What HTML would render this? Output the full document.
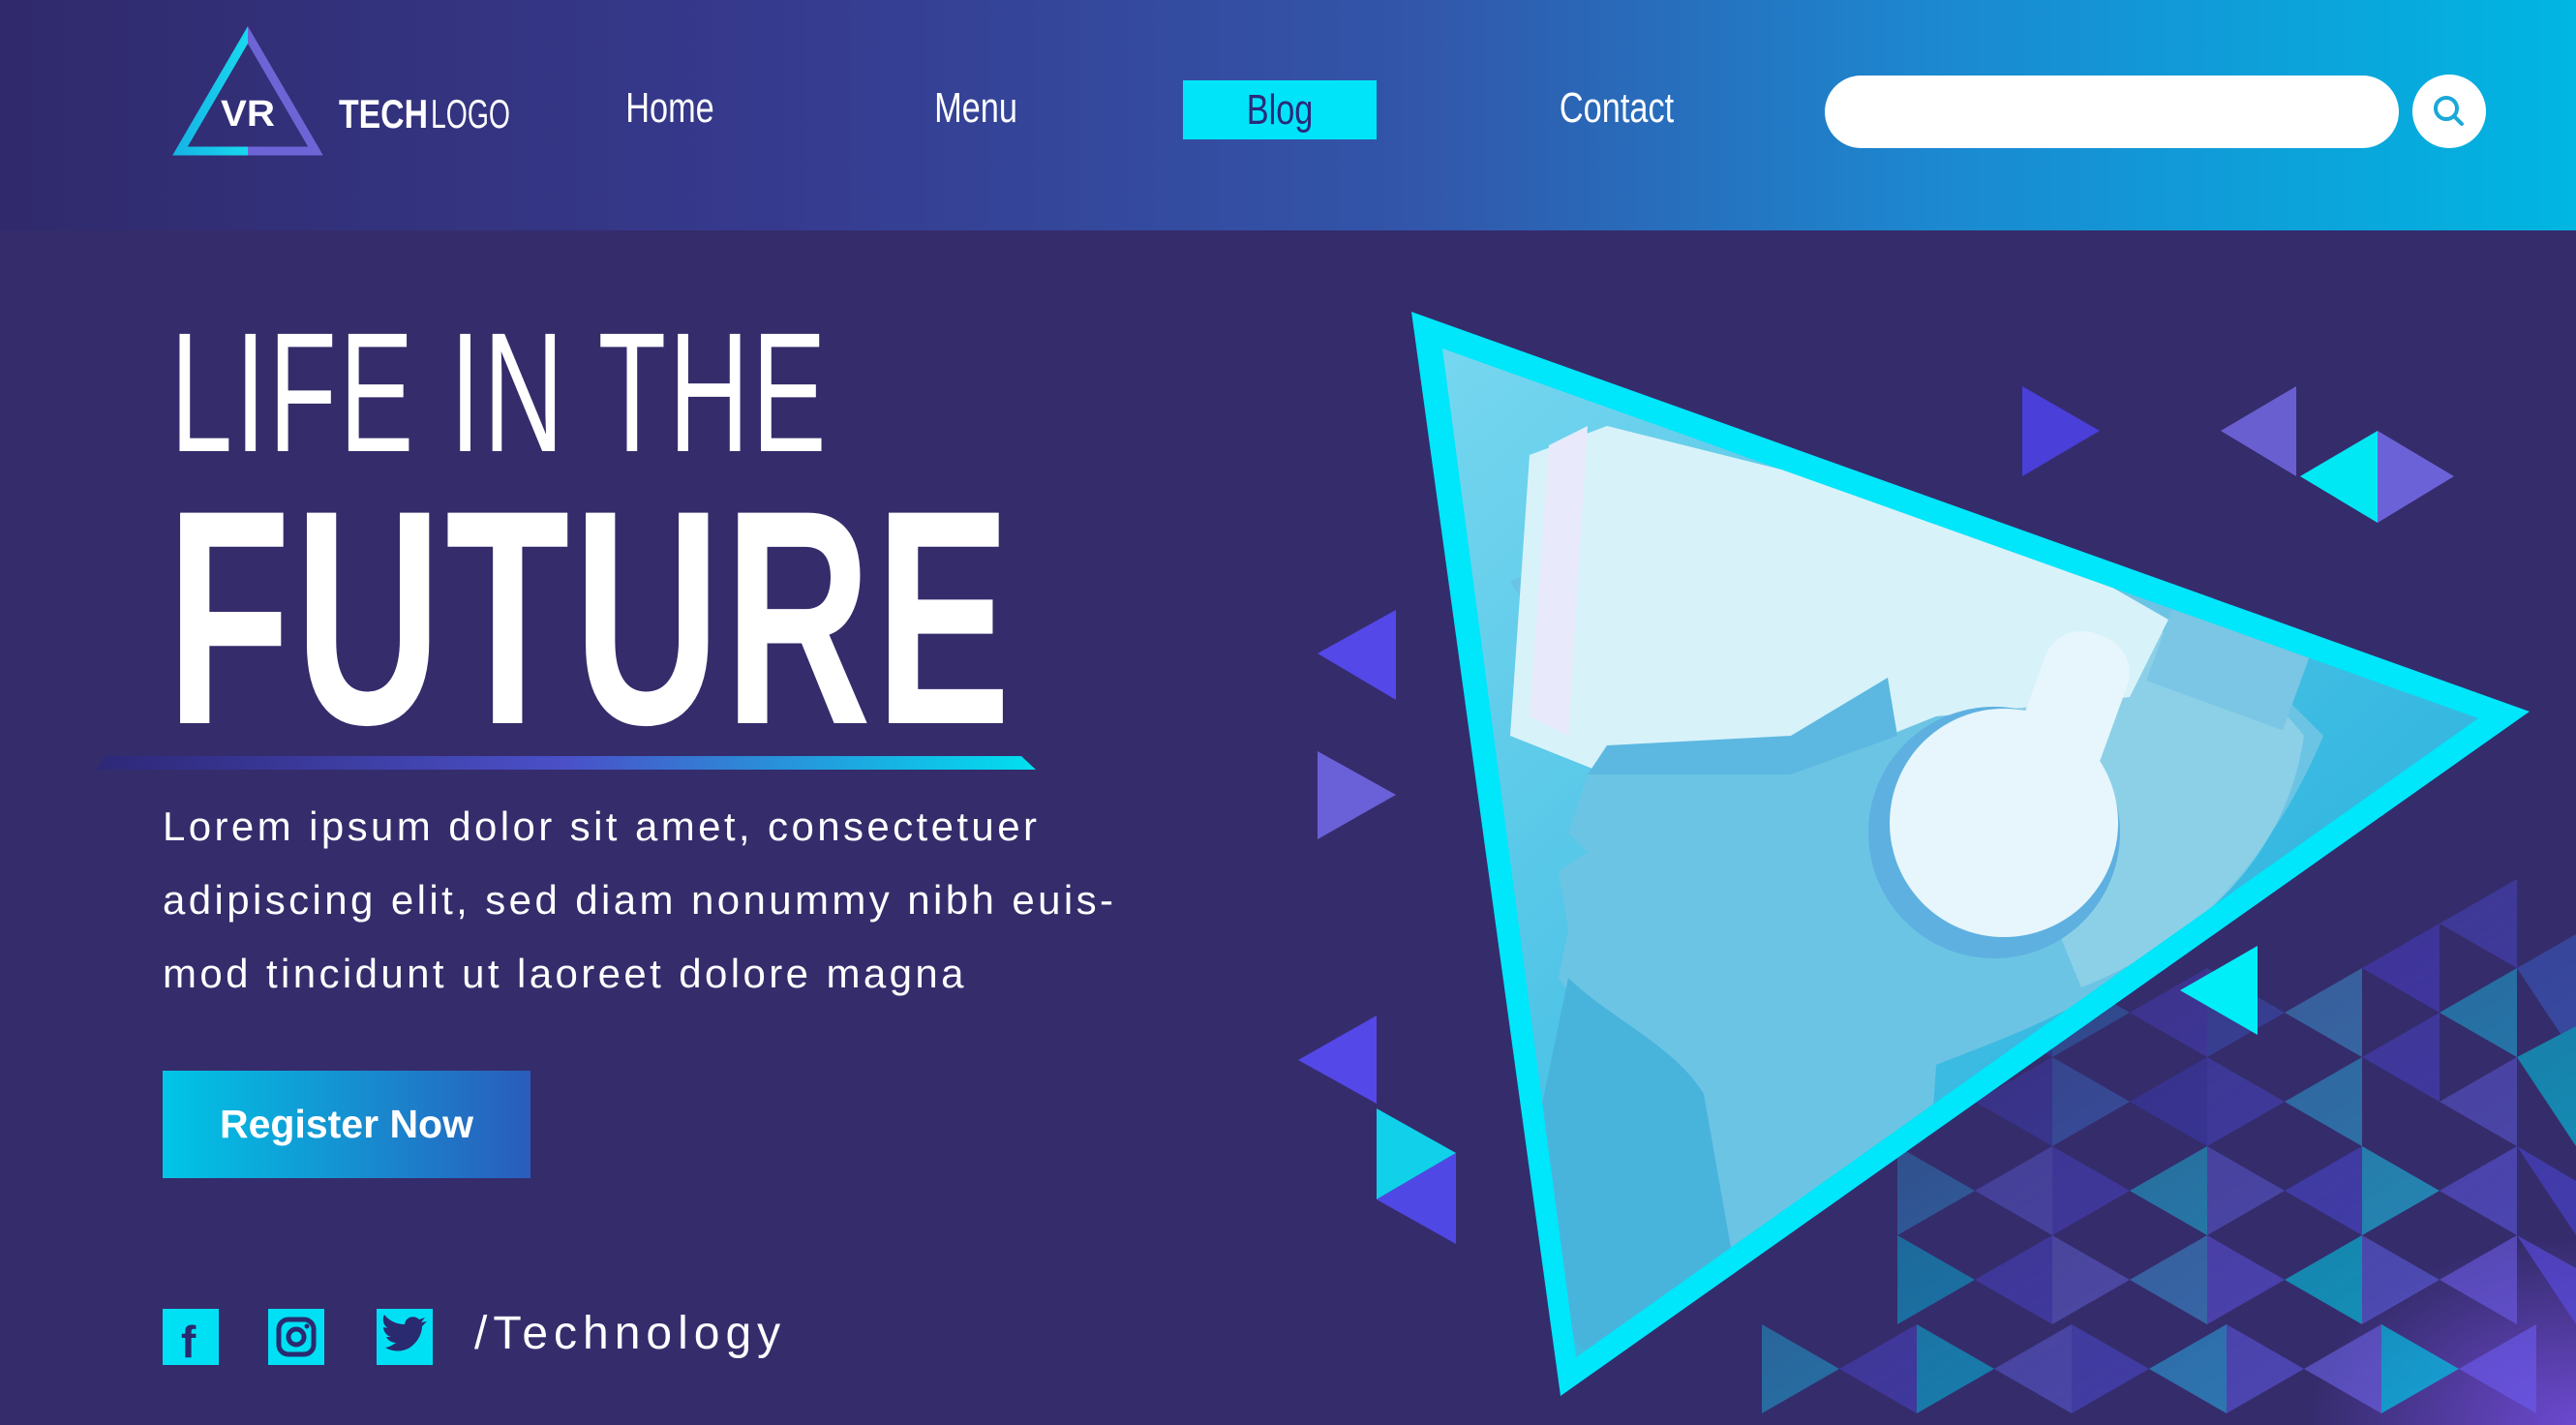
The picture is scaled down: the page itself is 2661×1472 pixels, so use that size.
<!DOCTYPE html>
<html><head><meta charset="utf-8"><style>
*{margin:0;padding:0;box-sizing:border-box}
body{width:2661px;height:1472px;overflow:hidden;background:#352c6c;font-family:"Liberation Sans",sans-serif;position:relative}
.hdr{position:absolute;left:0;top:0;width:2661px;height:238px;background:linear-gradient(90deg,#302a6c 0%,#363a8e 30%,#3256aa 55%,#1c88d0 75%,#00b6e2 100%)}
.nav{position:absolute;top:87px;color:#fff;font-size:44px;transform:translateX(-50%) scaleX(0.78)}
.blog{position:absolute;left:1222px;top:83px;width:200px;height:61px;background:#00e4fa;color:#2a2a7a;font-size:44px;text-align:center;line-height:61px}
.blog span{display:inline-block;transform:scaleX(0.78)}
.search{position:absolute;left:1885px;top:78px;width:593px;height:75px;border-radius:38px;background:#fff}
.sbtn{position:absolute;left:2492px;top:77px;width:76px;height:76px;border-radius:50%;background:#fff}
.h1{position:absolute;left:176px;top:318px;color:#fff;font-size:176px;font-weight:normal;line-height:1;letter-spacing:4px;transform:scaleX(0.655);transform-origin:left;white-space:nowrap}
.h2{position:absolute;left:172px;top:480px;color:#fff;font-size:316px;font-weight:bold;line-height:1;letter-spacing:6px;transform:scaleX(0.665);transform-origin:left;white-space:nowrap}
.p{position:absolute;left:168px;top:816px;color:#fff;font-size:42px;line-height:76px;letter-spacing:3.4px;width:1300px;white-space:nowrap}
.btn{position:absolute;left:168px;top:1106px;width:380px;height:111px;background:linear-gradient(90deg,#00c6e6,#2a5cbc);color:#fff;font-weight:bold;font-size:41px;text-align:center;line-height:111px}
.tech{position:absolute;left:490px;top:1350px;color:#fff;font-size:48px;letter-spacing:6px}
</style></head><body>
<div class="hdr"></div>
<svg style="position:absolute;left:0;top:0" width="700" height="238">
<defs><linearGradient id="lg" x1="0" x2="1"><stop offset="0" stop-color="#16b6e6"/><stop offset="0.5" stop-color="#18d8ee"/><stop offset="0.5" stop-color="#6d64d6"/></linearGradient></defs>
<polygon points="256,36 326,156 186,156" fill="none" stroke="url(#lg)" stroke-width="9"/>
<text x="256" y="130" text-anchor="middle" fill="#fff" font-family="Liberation Sans" font-weight="bold" font-size="38" textLength="56" lengthAdjust="spacingAndGlyphs">VR</text>
<text x="350" y="132" fill="#fff" font-family="Liberation Sans" font-weight="bold" font-size="42" textLength="92" lengthAdjust="spacingAndGlyphs">TECH</text>
<text x="445" y="132" fill="#fff" font-family="Liberation Sans" font-size="42" textLength="82" lengthAdjust="spacingAndGlyphs">LOGO</text>
</svg>
<div class="nav" style="left:692px">Home</div>
<div class="nav" style="left:1008px">Menu</div>
<div class="blog"><span>Blog</span></div>
<div class="nav" style="left:1670px">Contact</div>
<div class="search"></div>
<div class="sbtn"><svg width="76" height="76"><circle cx="35" cy="35" r="11" fill="none" stroke="#1aa8d8" stroke-width="4"/><line x1="43" y1="43" x2="51" y2="51" stroke="#1aa8d8" stroke-width="4" stroke-linecap="round"/></svg></div>

<div class="h1">LIFE IN THE</div>
<div class="h2">FUTURE</div>
<svg style="position:absolute;left:100px;top:775px" width="980" height="24"><defs><linearGradient id="ul" x1="0" x2="1"><stop offset="0" stop-color="#2e2878"/><stop offset="0.5" stop-color="#4a50c8"/><stop offset="1" stop-color="#00e0f0"/></linearGradient></defs><polygon points="10,6 955,6 970,20 0,20" fill="url(#ul)"/></svg>
<div class="p">Lorem ipsum dolor sit amet, consectetuer<br>adipiscing elit, sed diam nonummy nibh euis-<br>mod tincidunt ut laoreet dolore magna</div>
<div class="btn">Register Now</div>
<svg style="position:absolute;left:168px;top:1352px" width="290" height="58">
<rect x="0" y="0" width="58" height="58" fill="#00e0f4"/><text x="19" y="50" fill="#2a2a70" font-family="Liberation Sans" font-weight="bold" font-size="46">f</text>
<rect x="109" y="0" width="58" height="58" fill="#00e0f4"/><rect x="120" y="11" width="36" height="36" rx="10" fill="none" stroke="#2a2a70" stroke-width="5"/><circle cx="138" cy="29" r="8" fill="none" stroke="#2a2a70" stroke-width="5"/><circle cx="149" cy="18" r="2.5" fill="#2a2a70"/>
<rect x="221" y="0" width="58" height="58" fill="#00e0f4"/><path d="M230 40 c8 5 20 5 28-2 c7-6 10-14 10-20 l5-5 l-6 1 l4-5 l-6 2 c-5-5-14-3-15 5 c-10 0-17-5-21-10 c-3 6 0 12 4 14 l-5-1 c0 5 4 9 8 10 l-5 0 c2 4 6 6 10 6 c-4 3-8 5-12 5z" fill="#2a2a70"/>
</svg>
<div class="tech">/Technology</div>

<svg style="position:absolute;left:0;top:0" width="2661" height="1472">
<defs>
<clipPath id="ph"><polygon points="1490,360 2560,742 1628,1402"/></clipPath>
<linearGradient id="bg" x1="0" y1="0" x2="1" y2="1"><stop offset="0" stop-color="#7ad8f0"/><stop offset="1" stop-color="#10a6d8"/></linearGradient>
<linearGradient id="fade" x1="0" y1="0" x2="1" y2="1"><stop offset="0" stop-color="#fff" stop-opacity="0"/><stop offset="0.5" stop-color="#fff" stop-opacity="0.6"/><stop offset="1" stop-color="#fff" stop-opacity="1"/></linearGradient>
<mask id="mk"><rect x="1700" y="850" width="961" height="622" fill="url(#fade)"/></mask>
<radialGradient id="glow" cx="1" cy="1" r="0.6"><stop offset="0" stop-color="#7a50e8" stop-opacity="0.8"/><stop offset="1" stop-color="#7a50e8" stop-opacity="0"/></radialGradient>
</defs>
<rect x="2200" y="1150" width="461" height="322" fill="url(#glow)"/>
<g opacity="0.75" mask="url(#mk)">
<polygon points="1960,1000 2040,1046 1960,1092" fill="#3a46b8"/>
<polygon points="2040,1046 2120,1000 2120,1092" fill="#4040c0"/>
<polygon points="2120,1000 2200,1046 2120,1092" fill="#2a7ec8"/>
<polygon points="2200,1046 2280,1000 2280,1092" fill="#4a42c8"/>
<polygon points="2280,1000 2360,1046 2280,1092" fill="#3a56c0"/>
<polygon points="2360,1046 2440,1000 2440,1092" fill="#3aa0d8"/>
<polygon points="2440,1000 2520,954 2520,1046" fill="#4a3fd0"/>
<polygon points="2520,954 2600,908 2600,1000" fill="#4a48c8"/>
<polygon points="2520,1046 2600,1000 2600,1092" fill="#1ab0d8"/>
<polygon points="2600,1000 2661,965 2661,1092" fill="#3a60c8"/>
<polygon points="2440,1092 2520,1046 2520,1138" fill="#4a42c8"/>
<polygon points="2520,1138 2600,1092 2600,1184" fill="#5a58d0"/>
<polygon points="2600,1092 2661,1060 2661,1184" fill="#00c8e0"/>
<polygon points="2360,1138 2440,1092 2440,1184" fill="#2aa8d8"/>
<polygon points="2280,1092 2360,1138 2280,1184" fill="#4848c8"/>
<polygon points="2200,1138 2280,1092 2280,1184" fill="#3a3cb8"/>
<polygon points="2120,1092 2200,1138 2120,1184" fill="#3a70c8"/>
<polygon points="2040,1138 2120,1092 2120,1184" fill="#4040b8"/>
<polygon points="1960,1184 2040,1230 1960,1276" fill="#2a90c8"/>
<polygon points="2040,1230 2120,1184 2120,1276" fill="#5a5ad0"/>
<polygon points="2120,1184 2200,1230 2120,1276" fill="#4a44c8"/>
<polygon points="2200,1230 2280,1184 2280,1276" fill="#1ab8d8"/>
<polygon points="2280,1184 2360,1230 2280,1276" fill="#5a5ad0"/>
<polygon points="2360,1230 2440,1184 2440,1276" fill="#4a48d0"/>
<polygon points="2440,1184 2520,1230 2440,1276" fill="#1ac0e0"/>
<polygon points="2520,1230 2600,1184 2600,1276" fill="#5a54d8"/>
<polygon points="2600,1184 2661,1220 2661,1276" fill="#4a44d0"/>
<polygon points="1960,1276 2040,1322 1960,1368" fill="#00b8d8"/>
<polygon points="2040,1322 2120,1276 2120,1368" fill="#4a44c8"/>
<polygon points="2120,1276 2200,1322 2120,1368" fill="#6060d0"/>
<polygon points="2200,1322 2280,1276 2280,1368" fill="#3a90d0"/>
<polygon points="2280,1276 2360,1322 2280,1368" fill="#5a50d8"/>
<polygon points="2360,1322 2440,1276 2440,1368" fill="#00c8e0"/>
<polygon points="2440,1276 2520,1322 2440,1368" fill="#5a5cd8"/>
<polygon points="2520,1322 2600,1276 2600,1368" fill="#6a5ae0"/>
<polygon points="2600,1276 2661,1310 2661,1368" fill="#5a4ce0"/>
<polygon points="1820,1368 1900,1414 1820,1460" fill="#1ab0d8"/>
<polygon points="1900,1414 1980,1368 1980,1460" fill="#4a44c8"/>
<polygon points="1980,1368 2060,1414 1980,1460" fill="#00c0e0"/>
<polygon points="2060,1414 2140,1368 2140,1460" fill="#5a5ad0"/>
<polygon points="2140,1368 2220,1414 2140,1460" fill="#4a48c8"/>
<polygon points="2220,1414 2300,1368 2300,1460" fill="#2aa0d8"/>
<polygon points="2300,1368 2380,1414 2300,1460" fill="#5a54d8"/>
<polygon points="2380,1414 2460,1368 2460,1460" fill="#6a60e0"/>
<polygon points="2460,1368 2540,1414 2460,1460" fill="#00c8e8"/>
<polygon points="2540,1414 2620,1368 2620,1460" fill="#6a58e8"/>
</g>
<polygon points="2089,399 2169,445 2089,492" fill="#4a3fd8"/>
<polygon points="2294,445 2372,399 2372,492" fill="#6a5fd0"/>
<polygon points="2376,492 2456,445 2456,540" fill="#00e8f4"/>
<polygon points="2456,445 2535,492 2456,540" fill="#6c62d8"/>
<polygon points="1361,675 1442,630 1442,723" fill="#5548e8"/>
<polygon points="1361,776 1442,821 1361,867" fill="#6a60d8"/>
<polygon points="1341,1095 1422,1049 1422,1140" fill="#5548e8"/>
<polygon points="1422,1145 1504,1191 1422,1239" fill="#10d0ea"/>
<polygon points="1422,1239 1504,1191 1504,1285" fill="#5048e4"/>
<polygon points="2252,1023 2332,977 2332,1069" fill="#00eef8"/>
<polygon points="1458,322 2613,735 1612,1442" fill="#00e6fa"/>
<g clip-path="url(#ph)">
<rect x="1450" y="320" width="1200" height="1120" fill="url(#bg)"/>
<path d="M1560,600 L1660,760 L1640,800 L1620,860 L1640,880 L1610,900 L1620,960 L1610,1010 C1640,1060 1720,1080 1760,1130 L1760,1400 L1980,1400 L2000,1100 C2100,1060 2300,1000 2400,760 L2200,560 L1800,520 Z" fill="#6cc4e4"/>
<path d="M1620,1010 C1660,1050 1730,1080 1760,1130 L1790,1300 L1640,1400 L1560,1300 Z" fill="#48b4dc"/>
<path d="M2000,620 C2150,600 2300,660 2380,760 C2360,900 2250,980 2150,1020 C2100,900 2050,760 2000,620Z" fill="#9ad6ea" opacity="0.7"/>
<path d="M1580,470 L1660,440 L1900,500 L2100,560 L2240,640 L2200,720 L2000,740 L1850,800 L1660,800 L1560,760 Z" fill="#d8f2fa"/>
<path d="M1600,460 L1640,440 L1620,760 L1580,740 Z" fill="#e8eafc"/>
<path d="M1640,800 L1850,800 L1960,760 L1950,700 L1850,760 L1660,770Z" fill="#5cb8e0"/>
<rect x="2230" y="640" width="150" height="90" fill="#7ac6e4" transform="rotate(20 2300 680)"/>
<circle cx="2060" cy="860" r="130" fill="#5eb0e0"/>
<circle cx="2070" cy="850" r="118" fill="#e6f6fc"/>
<rect x="2100" y="650" width="90" height="160" rx="40" fill="#e6f6fc" transform="rotate(20 2140 720)"/>
</g>
</svg>
</body></html>
